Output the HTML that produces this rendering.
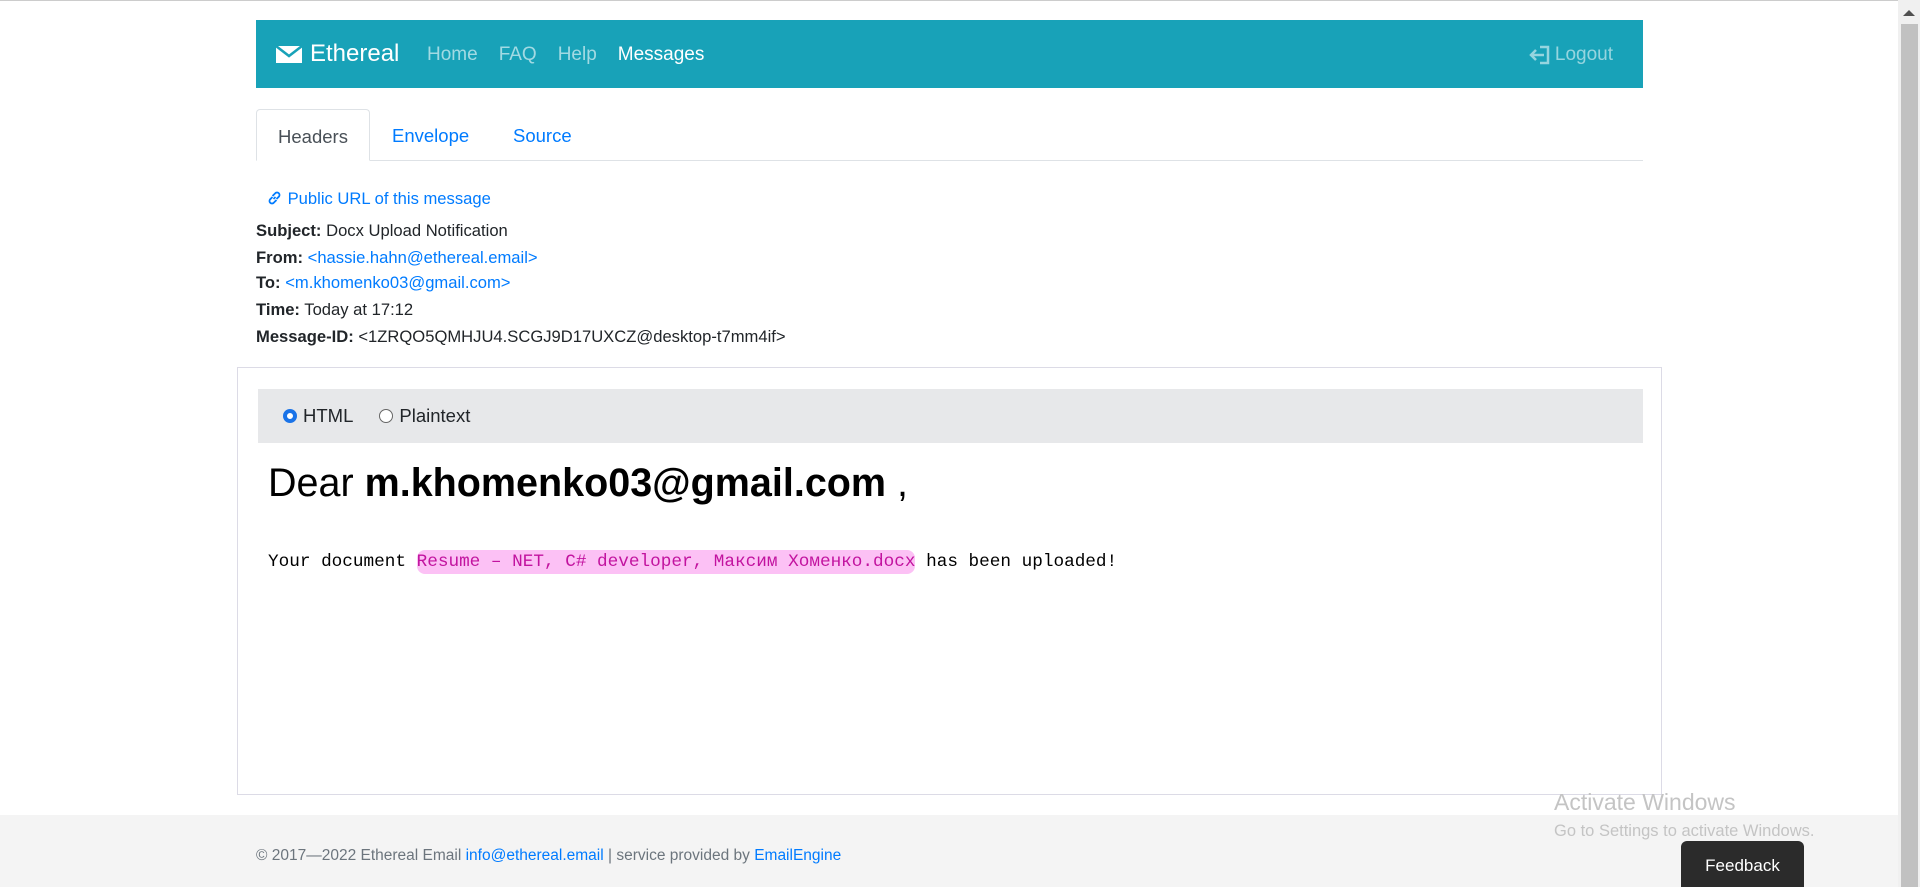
<!DOCTYPE html>
<html><head><meta charset="utf-8"><style>
*{box-sizing:border-box;margin:0;padding:0}
body{width:1920px;height:887px;overflow:hidden;background:#fff;font-family:"Liberation Sans",sans-serif;font-size:16px;color:#212529;position:relative}
.topline{position:absolute;left:0;top:0;width:1898px;height:1px;background:#ccc}
.nav{position:absolute;left:256px;top:20px;width:1387px;height:68px;background:#18a2b8;color:#fff}
.brand{position:absolute;left:20px;top:20px;font-size:24px;display:flex;align-items:center;gap:8px}
.links{position:absolute;left:171px;top:24px;font-size:19px;display:flex;gap:21px;color:rgba(255,255,255,.6)}
.links .a{color:#fff}
.logout{position:absolute;right:30px;top:24px;font-size:19px;color:rgba(255,255,255,.55);display:flex;align-items:center;gap:4px}
.tabs{position:absolute;left:256px;top:109px;width:1387px;height:52px;border-bottom:1px solid #dee2e6}
.tab{position:absolute;top:2px;height:50px;line-height:50px;font-size:18.5px;color:#007bff}
.tab.act{top:0;left:0;width:114px;height:52px;line-height:54px;border:1px solid #dee2e6;border-bottom:1px solid #fff;border-radius:4px 4px 0 0;color:#495057;text-align:center;background:#fff}
.hdr{position:absolute;left:256px;font-size:16.6px;line-height:20px}
.hdr b{font-weight:bold}
a{color:#007bff;text-decoration:none}
.card{position:absolute;left:237px;top:367px;width:1425px;height:428px;border:1px solid #dcdbe6}
.bar{position:absolute;left:20px;top:21px;width:1385px;height:54px;background:#e7e8ea;font-size:18.5px;display:flex;align-items:center;padding-left:25px;gap:6px}
.radio{width:14px;height:14px;border-radius:50%;border:1px solid #666;display:inline-block;background:#fff}
.radio.on{border:4px solid #1a73e8}
.dear{position:absolute;left:30px;top:93px;font-size:39.5px;color:#000}
.doc{position:absolute;left:30px;top:184px;font-family:"Liberation Mono",monospace;font-size:17.7px;color:#000}
.hl{background:#fcc1f5;color:#c2139f;border-radius:8px;padding:2px 0}
.footer{position:absolute;left:0;top:815px;width:1898px;height:72px;background:#f4f4f4}
.ftxt{position:absolute;left:256px;top:32px;font-size:15.5px;color:#6c757d}
.act1{position:absolute;left:1554px;top:789px;font-size:23px;color:#c4c4c4}
.act2{position:absolute;left:1554px;top:822px;font-size:16.5px;color:#c4c4c4}
.fb{position:absolute;left:1681px;top:841px;width:123px;height:46px;background:#2b2b2b;border-radius:6px 6px 0 0;color:#fff;font-size:17px;text-align:center;line-height:50px}
.sb{position:absolute;left:1898px;top:0;width:22px;height:887px;background:#f0f0f0}
.sbt{position:absolute;left:1901px;top:24px;width:17px;height:863px;background:#c1c1c1}
</style></head><body>
<div class="topline"></div>
<div class="nav">
 <div class="brand"><svg width="26" height="20" viewBox="0 0 26 20"><rect x="0" y="2" width="26" height="17" fill="#fff"/><path d="M0 2 L13 12 L26 2" stroke="#18a2b8" stroke-width="2.5" fill="none"/></svg>Ethereal</div>
 <div class="links"><span>Home</span><span>FAQ</span><span>Help</span><span class="a">Messages</span></div>
 <div class="logout"><svg width="22" height="20" viewBox="0 0 22 20" fill="none" stroke="rgba(255,255,255,.55)" stroke-width="2.5"><path d="M11 2h8v16h-8"/><path d="M15 10H3M7 5l-5 5 5 5"/></svg>Logout</div>
</div>
<div class="tabs">
 <div class="tab act">Headers</div>
 <div class="tab" style="left:136px">Envelope</div>
 <div class="tab" style="left:257px">Source</div>
</div>
<div class="hdr" style="top:189px;left:266px"><a><svg width="17" height="16" viewBox="0 0 16 16" fill="none" stroke="#007bff" stroke-width="1.8" style="vertical-align:-2px"><path d="M7 9l2-2"/><path d="M6 6l3-3a2.5 2.5 0 013.5 3.5L10 9"/><path d="M10 10l-3 3a2.5 2.5 0 01-3.5-3.5L6 7"/></svg> Public URL of this message</a></div>
<div class="hdr" style="top:221px"><b>Subject:</b> Docx Upload Notification</div>
<div class="hdr" style="top:248px"><b>From:</b> <a>&lt;hassie.hahn@ethereal.email&gt;</a></div>
<div class="hdr" style="top:273px"><b>To:</b> <a>&lt;m.khomenko03@gmail.com&gt;</a></div>
<div class="hdr" style="top:300px"><b>Time:</b> Today at 17:12</div>
<div class="hdr" style="top:327px"><b>Message-ID:</b> &lt;1ZRQO5QMHJU4.SCGJ9D17UXCZ@desktop-t7mm4if&gt;</div>
<div class="card">
 <div class="bar"><span class="radio on"></span><span>HTML</span><span style="width:14px"></span><span class="radio"></span><span>Plaintext</span></div>
 <div class="dear">Dear <b>m.khomenko03@gmail.com</b> ,</div>
 <div class="doc">Your document <span class="hl">Resume – NET, C# developer, Максим Хоменко.docx</span> has been uploaded!</div>
</div>
<div class="footer"><div class="ftxt">© 2017—2022 Ethereal Email <a>info@ethereal.email</a> | service provided by <a>EmailEngine</a></div></div>
<div class="act1">Activate Windows</div>
<div class="act2">Go to Settings to activate Windows.</div>
<div class="fb">Feedback</div>
<div class="sb"></div><div class="sbt"></div>
<div style="position:absolute;left:1903px;top:10px;width:0;height:0;border-left:6px solid transparent;border-right:6px solid transparent;border-bottom:6px solid #505050"></div>
</body></html>
